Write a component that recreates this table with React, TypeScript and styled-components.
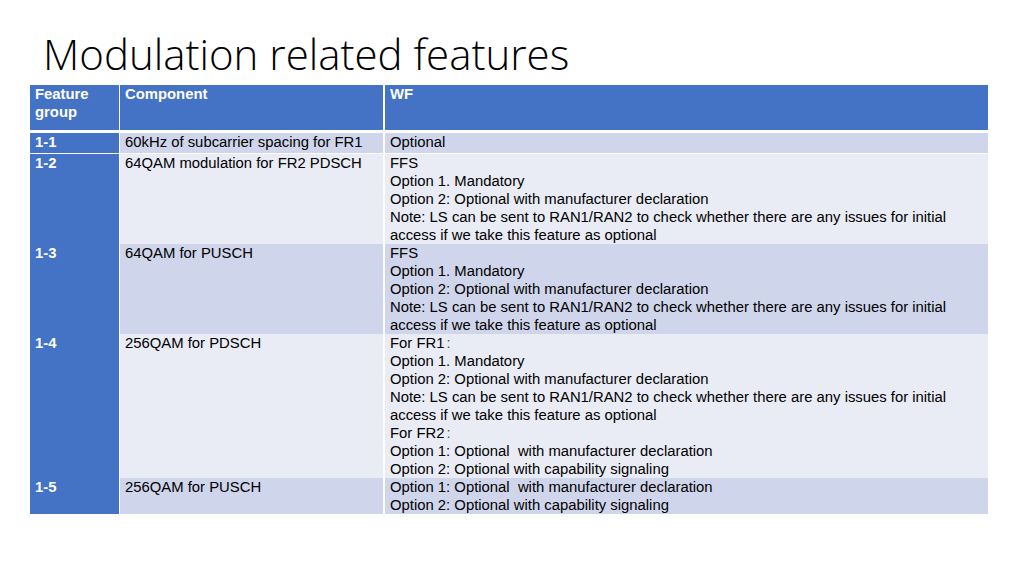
import React from 'react';
import styled, { createGlobalStyle } from 'styled-components';

type Tone = 'head' | 'dark' | 'light';

interface FeatureRow {
  id: string;
  component: string;
  wf: string[];
  tone: Tone;
  height: number;
}

const GlobalStyle = createGlobalStyle`
  html, body {
    margin: 0;
    padding: 0;
    background: #ffffff;
  }
  * {
    box-sizing: border-box;
  }
`;

const Slide = styled.div`
  width: 1024px;
  height: 576px;
  padding: 28px 36px 0 30px;
  background: #ffffff;
`;

const Title = styled.h1`
  margin: 0 0 5px 0;
  padding-left: 13px;
  height: 52px;
  font-family: 'Open Sans', 'Noto Sans', sans-serif;
  font-weight: 300;
  font-size: 42px;
  line-height: 52px;
  color: #000000;
  white-space: nowrap;
`;

const Table = styled.div`
  display: flex;
  flex-direction: column;
  width: 958px;
  font-family: 'Liberation Sans', Arial, 'Noto Sans CJK SC', sans-serif;
  font-size: 14.85px;
  line-height: 18px;
`;

const Row = styled.div<{ $h: number; $head?: boolean }>`
  display: grid;
  grid-template-columns: 90px 265px 1fr;
  height: ${(p) => p.$h}px;
  border-bottom: ${(p) => (p.$head ? 3 : 1)}px solid #ffffff;
`;

const toneColor: Record<Tone, string> = {
  head: '#4472c4',
  dark: '#cfd5ea',
  light: '#e9ebf5',
};

const Cell = styled.div<{ $tone: Tone; $sep: number }>`
  padding: 0 5px;
  background: ${(p) => toneColor[p.$tone]};
  border-right: ${(p) => p.$sep}px solid #ffffff;
  color: ${(p) => (p.$tone === 'head' ? '#ffffff' : '#000000')};
  font-weight: ${(p) => (p.$tone === 'head' ? 700 : 400)};
`;

const Line = styled.div`
  white-space: pre;
`;

const Colon = styled.span`
  color: #555555;
  padding-left: 2px;
`;

const rows: FeatureRow[] = [
  {
    id: '1-1',
    component: '60kHz of subcarrier spacing for FR1',
    wf: ['Optional'],
    tone: 'dark',
    height: 21,
  },
  {
    id: '1-2',
    component: '64QAM modulation for FR2 PDSCH',
    wf: [
      'FFS',
      'Option 1. Mandatory',
      'Option 2: Optional with manufacturer declaration',
      'Note: LS can be sent to RAN1/RAN2 to check whether there are any issues for initial',
      'access if we take this feature as optional',
    ],
    tone: 'light',
    height: 90,
  },
  {
    id: '1-3',
    component: '64QAM for PUSCH',
    wf: [
      'FFS',
      'Option 1. Mandatory',
      'Option 2: Optional with manufacturer declaration',
      'Note: LS can be sent to RAN1/RAN2 to check whether there are any issues for initial',
      'access if we take this feature as optional',
    ],
    tone: 'dark',
    height: 90,
  },
  {
    id: '1-4',
    component: '256QAM for PDSCH',
    wf: [
      'For FR1:',
      'Option 1. Mandatory',
      'Option 2: Optional with manufacturer declaration',
      'Note: LS can be sent to RAN1/RAN2 to check whether there are any issues for initial',
      'access if we take this feature as optional',
      'For FR2:',
      'Option 1: Optional  with manufacturer declaration',
      'Option 2: Optional with capability signaling',
    ],
    tone: 'light',
    height: 144,
  },
  {
    id: '1-5',
    component: '256QAM for PUSCH',
    wf: [
      'Option 1: Optional  with manufacturer declaration',
      'Option 2: Optional with capability signaling',
    ],
    tone: 'dark',
    height: 36,
  },
];

const renderLine = (l: string) =>
  l.endsWith(':') && l.startsWith('For ') ? (
    <>
      {l.slice(0, -1)}
      <Colon>:</Colon>
    </>
  ) : (
    l
  );

export default function App() {
  return (
    <>
      <GlobalStyle />
      <Slide>
        <Title>Modulation related features</Title>
        <Table>
          <Row $h={48} $head>
            <Cell $tone="head" $sep={1}>Feature group</Cell>
            <Cell $tone="head" $sep={2}>Component</Cell>
            <Cell $tone="head" $sep={0}>WF</Cell>
          </Row>
          {rows.map((r) => (
            <Row key={r.id} $h={r.height}>
              <Cell $tone="head" $sep={1}>{r.id}</Cell>
              <Cell $tone={r.tone} $sep={2}>{r.component}</Cell>
              <Cell $tone={r.tone} $sep={0}>
                {r.wf.map((l, i) => (
                  <Line key={i}>{renderLine(l)}</Line>
                ))}
              </Cell>
            </Row>
          ))}
        </Table>
      </Slide>
    </>
  );
}
